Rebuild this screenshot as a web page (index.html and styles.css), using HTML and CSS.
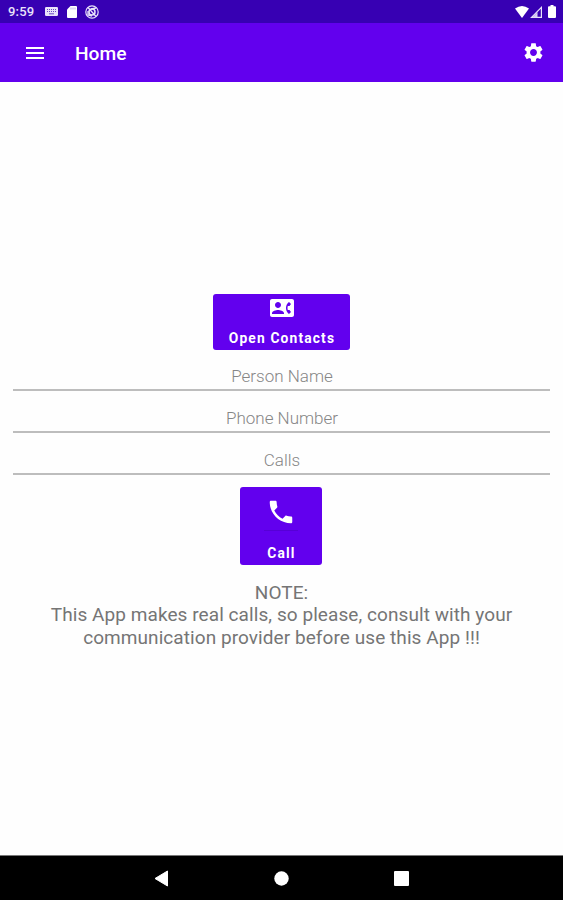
FILE: index.html
```html
<!DOCTYPE html>
<html lang="en">
<head>
  <meta charset="UTF-8">
  <meta name="viewport" content="width=device-width, initial-scale=1.0">
  <title>Home</title>
  <link rel="stylesheet" href="styles.css">
</head>
<body>
  <div class="status-bar">
    <span class="time">9:59</span>
    <svg class="keyboard" width="13" height="9" viewBox="0 0 13 9">
      <rect width="13" height="9" rx="1.2" fill="#e9e3fa"/>
      <path d="M2 2.5h9M2 4.5h9" stroke="#6b48c8" stroke-dasharray="1 1"/>
      <path d="M4 6.8h5" stroke="#6b48c8"/>
    </svg>
    <svg class="sd-card" width="10" height="12" viewBox="0 0 10 12">
      <path d="M3.5 0H9a1 1 0 0 1 1 1v10a1 1 0 0 1-1 1H1a1 1 0 0 1-1-1V3.500z" fill="#fff"/>
      <path d="M4 1.500v2M6 1.500v2M8 1.500v2" stroke="#a994df" stroke-width=".8"/>
    </svg>
    <svg class="sync" width="14" height="14" viewBox="0 0 14 14" fill="none" stroke="#e9e3fa">
      <circle cx="7" cy="7" r="6.200" stroke-width="1.200"/>
      <circle cx="7" cy="7" r="3" stroke-width="1.500"/>
      <path d="M3 2.500l8 9M6 4l5-1M3 6v4l4 1" stroke-width="1.300"/>
    </svg>
    <div class="status-right">
      <svg width="14" height="12" viewBox="0 0 14 12"><path d="M0 2.500Q7-2.500 14 2.500L7 12z" fill="#fff"/></svg>
      <svg class="signal" width="13" height="12" viewBox="0 0 13 12">
        <path d="M1.500 11.400L11.400 1.400v10z" fill="none" stroke="#e9e3fa" stroke-width="1.200"/>
        <path d="M2 11.500L7.500 6v5.500z" fill="#d9cff5"/>
      </svg>
      <svg class="battery" width="8" height="13" viewBox="0 0 8 13"><path d="M2.500 0h3v1.300H7a1 1 0 0 1 1 1V12a1 1 0 0 1-1 1H1a1 1 0 0 1-1-1V2.300a1 1 0 0 1 1-1h1.500z" fill="#fff"/></svg>
    </div>
  </div>

  <header class="app-bar">
    <svg class="icon" viewBox="0 0 24 24"><path d="M3 18h18v-2H3v2zm0-5h18v-2H3v2zm0-7v2h18V6H3z"/></svg>
    <h1>Home</h1>
    <svg class="icon settings" viewBox="0 0 24 24"><path d="M19.140 12.940c.04-.3.06-.61.06-.94 0-.32-.02-.64-.07-.94l2.030-1.580c.18-.14.23-.41.12-.61l-1.920-3.320c-.12-.22-.37-.29-.59-.22l-2.390.96c-.5-.38-1.030-.7-1.620-.94l-.36-2.540c-.04-.24-.24-.41-.48-.41h-3.840c-.24 0-.43.17-.47.41l-.36 2.540c-.59.24-1.130.57-1.620.94l-2.390-.96c-.22-.08-.47 0-.59.22L2.740 8.870c-.12.21-.08.47.12.61l2.030 1.580c-.05.3-.09.63-.09.94s.02.64.07.94l-2.030 1.580c-.18.14-.23.41-.12.61l1.920 3.320c.12.22.37.29.59.22l2.390-.96c.5.38 1.030.7 1.620.94l.36 2.540c.05.24.24.41.48.41h3.840c.24 0 .44-.17.47-.41l.36-2.540c.59-.24 1.130-.56 1.620-.94l2.390.96c.22.08.47 0 .59-.22l1.920-3.320c.12-.22.07-.47-.12-.61l-2.010-1.580zM12 15.600c-1.980 0-3.600-1.620-3.600-3.600s1.620-3.600 3.600-3.600 3.600 1.620 3.600 3.600-1.620 3.600-3.600 3.600z"/></svg>
  </header>

  <main>
    <button class="btn contacts">
      <svg class="icon" viewBox="0 0 24 24"><path d="M22 3H2C.9 3 0 3.900 0 5v14c0 1.100.9 2 2 2h20c1.100 0 1.990-.9 1.990-2L24 5c0-1.100-.9-2-2-2zM8 6c1.660 0 3 1.340 3 3s-1.340 3-3 3-3-1.340-3-3 1.340-3 3-3zm6 12H2v-1c0-2 4-3.100 6-3.100s6 1.100 6 3.100v1zm3.850-4h1.640L21 16l-1.990 1.990c-1.310-.98-2.280-2.380-2.730-3.990-.18-.64-.28-1.310-.28-2s.1-1.360.28-2c.45-1.620 1.420-3.010 2.730-3.990L21 8l-1.510 2h-1.640c-.22.63-.35 1.300-.35 2s.13 1.370.35 2z"/></svg>
      <span>Open Contacts</span>
    </button>

    <div class="fields">
      <input type="text" placeholder="Person Name">
      <input type="text" placeholder="Phone Number">
      <input type="text" placeholder="Calls">
    </div>

    <button class="btn call">
      <svg class="icon" viewBox="0 0 24 24"><path d="M6.620 10.790c1.440 2.830 3.760 5.140 6.590 6.590l2.200-2.200c.27-.27.67-.36 1.020-.24 1.120.37 2.330.57 3.570.57.55 0 1 .45 1 1V20c0 .55-.45 1-1 1-9.390 0-17-7.610-17-17 0-.55.45-1 1-1h3.500c.55 0 1 .45 1 1 0 1.250.2 2.450.57 3.570.11.35.03.74-.25 1.020l-2.200 2.200z"/></svg>
      <i class="underline"></i>
      <span>Call</span>
    </button>

    <p class="note">NOTE:<br>This App makes real calls, so please, consult with your<br>communication provider before use this App !!!</p>
  </main>

  <nav class="nav-bar">
    <svg width="15" height="17" viewBox="0 0 15 17"><path d="M13.500 1v15L1 8.500z" fill="#fff" stroke="#fff" stroke-linejoin="round"/></svg>
    <svg width="15" height="15" viewBox="0 0 15 15"><circle cx="7.500" cy="7.500" r="7.200" fill="#fff"/></svg>
    <svg width="15" height="15" viewBox="0 0 15 15"><rect width="15" height="15" rx="1" fill="#fff"/></svg>
  </nav>
</body>
</html>
```
FILE: styles.css
```css
* {
  margin: 0;
  padding: 0;
  box-sizing: border-box;
}

body {
  height: 100vh;
  display: flex;
  flex-direction: column;
  overflow: hidden;
  background: #fefefe;
  font-family: Roboto, sans-serif;
}

svg {
  display: block;
  flex: none;
}

.icon {
  width: 24px;
  height: 24px;
  fill: #fff;
}

/* Status bar */
.status-bar {
  height: 23px;
  padding: 0 7px 0 8px;
  display: flex;
  align-items: center;
  background: #3700b3;
  color: #e9e3fa;
}

.time {
  width: 37px;
  font-size: 13px;
  font-weight: 500;
  letter-spacing: 0.2px;
}

.sd-card { margin-left: 9px; }
.sync { margin-left: 8px; }

.status-right {
  margin-left: auto;
  display: flex;
  align-items: center;
}

.signal { margin-left: 1px; }
.battery { margin: 0 0 1px 5px; }

/* App bar */
.app-bar {
  height: 59px;
  padding: 0 18.500px 0 23px;
  display: flex;
  align-items: center;
  background: #6200ee;
  color: #fff;
}

.app-bar h1 {
  margin-left: 28px;
  padding-top: 2px;
  font-size: 19.200px;
  font-weight: 500;
}

.settings {
  width: 23px;
  height: 23px;
  margin-left: auto;
}

/* Content */
main {
  flex: 1;
  padding: 212px 13px 0;
  display: flex;
  flex-direction: column;
  align-items: center;
}

.btn {
  display: flex;
  flex-direction: column;
  align-items: center;
  border: 0;
  border-radius: 3px;
  background: #6200ee;
  color: #fff;
  font-family: inherit;
  font-size: 13.800px;
  font-weight: 700;
  line-height: 16px;
  letter-spacing: 1.150px;
}

.contacts {
  width: 137px;
  height: 56px;
  padding-top: 2px;
}

.contacts span { margin: 10px 0 0 1px; }

.call {
  width: 82px;
  height: 78px;
  margin: 12px 1px 0 0;
  padding-top: 10px;
}

.call .icon {
  width: 30px;
  height: 30px;
}

.underline {
  width: 34px;
  height: 1px;
  margin-top: 3px;
  background: #5600d6;
}

.call span { margin: 14px 0 0 1px; }

.fields {
  width: 100%;
  padding-top: 1px;
}

.fields input {
  display: block;
  width: 100%;
  height: 42.200px;
  padding: 15px 0 0 1px;
  border: 0;
  border-bottom: 2px solid #bdbdbd;
  background: none;
  font: 300 17px Roboto, sans-serif;
  text-align: center;
}

.fields input:first-child {
  height: 39.500px;
  padding-top: 12px;
}

.fields input::placeholder { color: #868686; }

.note {
  margin-top: 17px;
  color: #757575;
  font-size: 19px;
  line-height: 22.500px;
  letter-spacing: 0.07px;
  text-align: center;
  white-space: nowrap;
}

/* Navigation bar */
.nav-bar {
  height: 45px;
  display: flex;
  justify-content: center;
  align-items: center;
  gap: 105px;
  border-top: 1px solid #777;
  background: #000;
}
```
